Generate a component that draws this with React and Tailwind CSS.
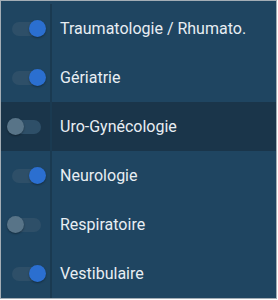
import React from 'react';

const items = [
    { label: 'Traumatologie / Rhumato.', on: true },
    { label: 'Gériatrie', on: true },
    { label: 'Uro-Gynécologie', on: false, active: true },
    { label: 'Neurologie', on: true },
    { label: 'Respiratoire', on: false },
    { label: 'Vestibulaire', on: true },
];

const Toggle = ({ on }) => (
    <div className="relative w-[29px] h-[14px] rounded-full bg-[#2e4f68]">
        <div
            className={
                on
                    ? 'absolute top-[-2px] right-[-5px] w-[17px] h-[17px] rounded-full bg-[#2b6fd0] shadow-[0_1px_2px_rgba(0,0,0,0.35)]'
                    : 'absolute top-[-2px] left-[-5px] w-[17px] h-[17px] rounded-full bg-[#587488] shadow-[0_1px_2px_rgba(0,0,0,0.35)]'
            }
        />
    </div>
);

export default function App() {
    return (
        <div className="w-[278px] h-[300px] bg-white">
            <div className="w-[277px] h-[299px] border border-[#a3adb5] bg-[#1f4561] pt-[3px] font-['Roboto',sans-serif]">
                {items.map((item) => (
                    <div
                        key={item.label}
                        className={item.active ? 'flex h-[49px] bg-[#1a354a]' : 'flex h-[49px]'}
                    >
                        {/* switch column */}
                        <div className="w-[51px] shrink-0 flex items-center pl-[11px] border-r-2 border-[#1a3a51]">
                            <Toggle on={item.on} />
                        </div>
                        <div className="flex items-center pl-[8px] text-[16px] text-[#e8eef3] whitespace-nowrap">
                            {item.label}
                        </div>
                    </div>
                ))}
            </div>
        </div>
    );
}
